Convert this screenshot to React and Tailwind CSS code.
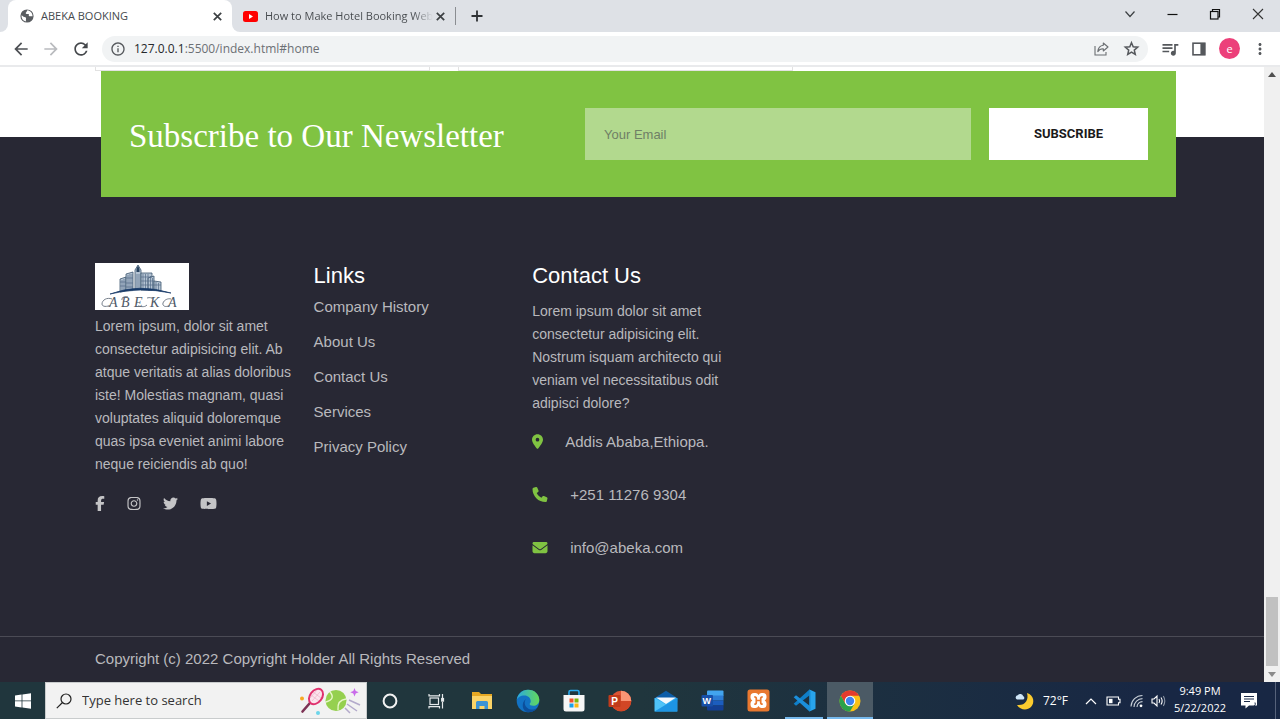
import React from "react";
import { FaFacebookF, FaInstagram, FaTwitter, FaYoutube, FaLocationDot, FaPhone, FaEnvelope } from "react-icons/fa6";
import { MdArrowBack, MdArrowForward, MdRefresh, MdInfoOutline, MdQueueMusic, MdMoreVert } from "react-icons/md";

const UI = "font-['Open_Sans','Noto_Sans',sans-serif]";

function ShareIcon() {
  return (
    <svg width="15" height="14" viewBox="0 0 15 14" fill="none" stroke="#6b6e72" strokeWidth="1.1">
      <path d="M1 4v9h11v-3" />
      <path d="M9.300 1l4.700 4-4.700 4V6.800C6.500 6.700 5 7.600 3.800 9.600 4.200 6 6 3.700 9.300 3.300z" strokeLinejoin="round" />
    </svg>
  );
}

function StarIcon() {
  return (
    <svg width="17" height="17" viewBox="0 0 17 17" fill="none" stroke="#55585c" strokeWidth="1.5">
      <path d="M8.500 2.700l1.700 4.100 4.500.4-3.400 2.900 1 4.400-3.800-2.300-3.800 2.300 1-4.400-3.400-2.900 4.500-.4z" />
    </svg>
  );
}

function CloseIcon() {
  return (
    <svg width="13" height="13" viewBox="0 0 13 13" stroke="#3c4043" strokeWidth="1.700">
      <path d="M2.800 2.800l7.400 7.400M10.200 2.800l-7.400 7.400" />
    </svg>
  );
}

function PanelIcon() {
  return (
    <svg width="14" height="14" viewBox="0 0 14 14">
      <rect x="1" y="1.200" width="11.800" height="11.600" fill="none" stroke="#55585c" strokeWidth="1.600" />
      <rect x="8.400" y="1" width="4.800" height="12" fill="#55585c" />
    </svg>
  );
}

function TabStrip() {
  return (
    <header className={`flex h-8 items-stretch bg-[#dee1e6] text-[11px] text-[#45494d] ${UI}`}>
      <div className="w-2 bg-white">
        <div className="h-full rounded-br-lg bg-[#dee1e6]" />
      </div>
      <div className="flex w-[224px] items-center rounded-t-lg bg-white pl-3 pr-2">
        <svg width="14" height="14" viewBox="0 0 14 14">
          <circle cx="7" cy="7" r="6.600" fill="#5a5d61" />
          <path d="M1.600 6.200c1.200.4 1.400 1.700 2.800 1.700 1.300 0 2 .9 1.600 2-.3.800-.2 1.600.2 2.400-2.900-.2-5-2.900-4.600-6.100z" fill="#fff" />
          <path d="M7.400 1.200c-.9 1-.4 1.700-1.400 2.400-.6.500-.2 1.300.6 1.300h1.600c.7 0 .9.700.6 1.300-.2.600.4 1 1.200 1h2.600c-.1-3-2.200-5.700-5.200-6z" fill="#fff" />
        </svg>
        <span className="ml-[7px] flex-1">ABEKA BOOKING</span>
        <button aria-label="Close tab ABEKA BOOKING"><CloseIcon /></button>
      </div>
      <div className="w-2 bg-white">
        <div className="h-full rounded-bl-lg bg-[#dee1e6]" />
      </div>
      <div className="flex w-[215px] items-center pl-[3px] pr-2">
        <svg width="15" height="11" viewBox="0 0 15 11" className="shrink-0">
          <rect width="15" height="11" rx="2.500" fill="#f00" />
          <path d="M6 3l4 2.500L6 8z" fill="#fff" />
        </svg>
        <span className="ml-[7px] whitespace-nowrap bg-linear-to-r from-[#45494d] from-88% to-[#dee1e6] bg-clip-text text-transparent">How to Make Hotel Booking Web</span>
        <button aria-label="Close tab How to Make Hotel Booking Web" className="ml-auto"><CloseIcon /></button>
      </div>
      <div className="my-[7px] w-px bg-[#8a8d91]" />
      <button aria-label="New tab" className="ml-[14px]">
        <svg width="14" height="14" viewBox="0 0 14 14" stroke="#2e3134" strokeWidth="1.800"><path d="M7 1.500v11M1.500 7h11" /></svg>
      </button>
      <div className="ml-auto flex items-center gap-[31px] pb-[5px] pr-4">
        <button aria-label="Search tabs">
          <svg width="12" height="12" viewBox="0 0 12 12" fill="none" stroke="#3c4043" strokeWidth="1.200"><path d="M1.500 3.500L6 8.500l4.500-5" /></svg>
        </button>
        <button aria-label="Minimize">
          <svg width="11" height="12" viewBox="0 0 11 12" stroke="#111" strokeWidth="1.200"><path d="M0.500 6.500h10" /></svg>
        </button>
        <button aria-label="Restore">
          <svg width="12" height="12" viewBox="0 0 12 12" fill="none" stroke="#111" strokeWidth="1.200"><rect x="1.500" y="3.500" width="7.500" height="7.500" /><path d="M3.500 3.500V1.500h7v7.500H9" /></svg>
        </button>
        <button aria-label="Close">
          <svg width="12" height="12" viewBox="0 0 12 12" stroke="#333" strokeWidth="1.100"><path d="M1 1l10 10M11 1L1 11" /></svg>
        </button>
      </div>
    </header>
  );
}

function Toolbar() {
  return (
    <div className={`flex h-[35px] items-center border-b-2 border-[#e9eaec] bg-white pl-[11px] pr-[11px] ${UI}`}>
      <button aria-label="Back"><MdArrowBack size={20} color="#4d5054" /></button>
      <button aria-label="Forward" className="ml-[10px]"><MdArrowForward size={20} color="#b9bbbe" /></button>
      <button aria-label="Reload" className="ml-[10px]"><MdRefresh size={20} color="#45484c" /></button>
      <div className="ml-[11px] flex h-[26px] flex-1 items-center rounded-full bg-[#f1f3f4] pl-2 pr-2">
        <MdInfoOutline size={16} color="#55585c" />
        <a href="#home" className="ml-2 flex-1 text-[12px] text-[#6c7074]"><span className="text-[#25282b]">127.0.0.1</span>:5500/index.html#home</a>
        <button aria-label="Share"><ShareIcon /></button>
        <button aria-label="Bookmark" className="ml-[14px]"><StarIcon /></button>
      </div>
      <button aria-label="Media" className="ml-3"><MdQueueMusic size={20} color="#55585c" /></button>
      <button aria-label="Side panel" className="ml-3"><PanelIcon /></button>
      <button aria-label="Profile" className="ml-[13px] flex h-[21px] w-[21px] items-center justify-center rounded-full bg-[#ec407a] text-[11px] leading-none text-white">e</button>
      <button aria-label="More" className="ml-[11px]"><MdMoreVert size={18} color="#55585c" /></button>
    </div>
  );
}

function BrandLogo() {
  return (
    <svg width="94" height="47" viewBox="0 0 94 47" role="img" aria-label="ABEKA" className="block">
      <rect width="94" height="47" fill="#fff" />
      <g fill="#b4c3d3" stroke="#3c556f" strokeWidth="0.800">
        <path d="M25 16l6-2v14l-6 1z" />
        <path d="M31 11l7-2v18l-7 1z" />
        <path d="M40 7l3-5 3 5v19h-6z" />
        <path d="M46 10h11v17H46z" />
        <path d="M53 15l6-2v14h-6z" />
        <path d="M59 18l7 1v9l-7-1z" />
      </g>
      <path d="M41.500 6l1.500-3.500L44.500 6v3h-3z" fill="#27425f" />
      <path d="M27 17v11M29 16v11M33 12v15M35 11v16M37 11v15M42 11v15M44 11v15M48 11v15M50.500 11v15M53 11v15M55.500 13v14M57.500 15v12M61 19v8M63.500 20v8M25 19h6M25 23h6M31 15h7M31 20h7M31 24h7M46 14h11M46 18h13M46 22h20" stroke="#536c86" strokeWidth="0.700" fill="none" />
      <path d="M15 31Q44 20 76 30 45 23.500 15 31z" fill="#173a68" stroke="#173a68" strokeWidth="0.700" />
      <text y="43.500" fontFamily="Liberation Serif, serif" fontStyle="italic" fontSize="14" fill="#4e5966">
        <tspan x="14">A</tspan><tspan x="26">B</tspan><tspan x="39">E</tspan><tspan x="55">K</tspan><tspan x="73">A</tspan>
      </text>
      <path d="M16 42c-4 2-9 2-9-1 0-4 5-7 10-5M27 37c-1-3 4-4 6-3M52 35c3-1 5 0 6 1M52 42c-3 3-7 1-9 1M75 42c-4 3-8 1-7-2 1-3 5-5 8-4" stroke="#66717e" strokeWidth="0.900" fill="none" />
    </svg>
  );
}

const links = ["Company History", "About Us", "Contact Us", "Services", "Privacy Policy"];

const socials = [
  { name: "Facebook", Icon: FaFacebookF, width: "w-[10px]" },
  { name: "Instagram", Icon: FaInstagram, width: "w-[14px]" },
  { name: "Twitter", Icon: FaTwitter, width: "w-[15px]" },
  { name: "YouTube", Icon: FaYoutube, width: "w-[17px]" },
];

function Page() {
  return (
    <main className="flex min-w-0 flex-1 flex-col bg-[#282834] font-['Liberation_Sans',Arial,sans-serif]">
      <div className="h-[70px] bg-white pl-[95px]">
        <div className="flex h-1 gap-7">
          <div className="w-[335px] border border-t-0 border-[#e2e2e2]" />
          <div className="w-[335px] border border-t-0 border-[#e2e2e2]" />
        </div>
      </div>
      <form className="-mt-[66px] ml-[101px] mr-[88px] flex h-[126px] items-center bg-[#80c342] px-7" onSubmit={(e) => e.preventDefault()}>
        <h2 className="flex-1 whitespace-nowrap pt-1 font-['Liberation_Serif',serif] text-[33px] leading-10 text-white">Subscribe to Our Newsletter</h2>
        <input type="email" aria-label="Your Email" placeholder="Your Email" className="h-[52px] w-[386px] bg-[#b2d98e] px-[19px] text-[13px] text-[#444] outline-none placeholder:text-[#6f7f66]" />
        <button className="ml-[18px] h-[52px] w-[159px] bg-white font-['Roboto',sans-serif] text-[13px] font-bold text-[#1a1a1a]">SUBSCRIBE</button>
      </form>
      <footer className="flex flex-1 flex-col text-[#b9b9bd]">
        <div className="ml-[95px] mr-[76px] grid flex-1 grid-cols-5 pt-[66px]">
          <section className="pr-5">
            <BrandLogo />
            <p className="mt-[5px] text-[14px] leading-[23px]">Lorem ipsum, dolor sit amet consectetur adipisicing elit. Ab atque veritatis at alias doloribus iste! Molestias magnam, quasi voluptates aliquid doloremque quas ipsa eveniet animi labore neque reiciendis ab quo!</p>
            <div className="mt-5 flex items-center gap-[22px]">
              {socials.map(({ name, Icon, width }) => (
                <a key={name} href="#home" aria-label={name} className={width}><Icon className="h-[15px] w-full" color="#c4c4c6" /></a>
              ))}
            </div>
          </section>
          <section>
            <h3 className="text-[22px] leading-[26px] text-white">Links</h3>
            <ul className="text-[15px] leading-[35px]">
              {links.map((l) => <li key={l}><a href="#home">{l}</a></li>)}
            </ul>
          </section>
          <section className="pr-5">
            <h3 className="text-[22px] leading-[26px] text-white">Contact Us</h3>
            <p className="mt-[11px] text-[14px] leading-[23px]">Lorem ipsum dolor sit amet consectetur adipisicing elit. Nostrum isquam architecto qui veniam vel necessitatibus odit adipisci dolore?</p>
            <ul className="text-[15px] leading-[53px]">
              <li className="flex items-center gap-[22px] whitespace-nowrap"><FaLocationDot className="h-[15px] w-[11px]" color="#80c342" />Addis Ababa,Ethiopa.</li>
              <li className="flex items-center gap-[22px]"><FaPhone className="h-[15px] w-4" color="#80c342" />+251 11276 9304</li>
              <li className="flex items-center gap-[22px]"><FaEnvelope className="h-[15px] w-4" color="#80c342" />info@abeka.com</li>
            </ul>
          </section>
        </div>
        <p className="border-t border-[#4b4b55] pb-3 pl-[95px] pt-[10px] text-[15px] leading-[23px]">Copyright (c) 2022 Copyright Holder All Rights Reserved</p>
      </footer>
    </main>
  );
}

function ScrollTrack() {
  return (
    <div className="flex w-4 flex-col items-center justify-between bg-[#f0f0f0] py-[5px]">
      <svg width="8" height="5" viewBox="0 0 8 5"><path d="M4 0l4 5H0z" fill="#505050" /></svg>
      <div className="mt-auto h-[69px] w-3 bg-[#c1c1c1]" />
      <svg width="8" height="5" viewBox="0 0 8 5" className="mt-[6px]"><path d="M4 5l4-5H0z" fill="#8a8a8a" /></svg>
    </div>
  );
}

function SportsArt() {
  return (
    <svg width="62" height="28" viewBox="0 0 62 28">
      <circle cx="3" cy="11.500" r="2" fill="#f7a823" />
      <circle cx="19" cy="26" r="2" fill="#6cd5ea" />
      <path d="M10.500 16.500l-7 8" stroke="#7d3355" strokeWidth="2.600" strokeLinecap="round" />
      <ellipse cx="17" cy="9.500" rx="6" ry="8.500" transform="rotate(38 17 9.500)" fill="#fbe3ec" stroke="#e0316e" strokeWidth="2" />
      <path d="M12 8l8 6M14 5l8 6M13 14l8-9M11 11l7-8" stroke="#e9a9c1" strokeWidth="0.600" />
      <circle cx="37" cy="13.500" r="10.500" fill="#95d04f" />
      <path d="M31 5q6 7-4 10M47 12q-9 1-8 11" stroke="#e7f7c8" strokeWidth="1.400" fill="none" />
      <path d="M55.500 1l1.200 3 3 1.200-3 1.200-1.200 3-1.200-3-3-1.200 3-1.200z" fill="#c96bea" />
      <path d="M50 13l11 5M48 17l10 7M46 21l5 5" stroke="#b3aacb" strokeWidth="1.500" />
    </svg>
  );
}

const apps = [
  { name: "Cortana", art: <svg width="16" height="16" viewBox="0 0 16 16"><circle cx="8" cy="8" r="6.400" fill="none" stroke="#f1f1f1" strokeWidth="2" /></svg> },
  { name: "Task view", art: <svg width="17" height="16" viewBox="0 0 17 16" fill="none" stroke="#e6eaec" strokeWidth="1.200"><rect x="2" y="5" width="8.500" height="6.500" /><path d="M1 1v1.800h10.500V1M1 15.500v-1.800h10.500v1.800M14.500 1v4M14.500 9v6.500" /><rect x="13.700" y="5.500" width="1.800" height="2.600" fill="#e6eaec" /></svg> },
  { name: "File Explorer", art: <svg width="22" height="19" viewBox="0 0 22 19"><path d="M1 1h7l2 2h11v6H1z" fill="#e6a823" /><path d="M1 5h20v13H1z" fill="#fbd367" /><path d="M5 18v-6.500Q5 10 6.500 10h9q1.500 0 1.500 1.500V18h-3.500v-3h-5v3z" fill="#3c93d4" /></svg> },
  { name: "Edge", art: <svg width="24" height="24" viewBox="0 0 24 24"><defs><linearGradient id="eg" x1="0" x2="1"><stop offset="0" stopColor="#2aa9e0" /><stop offset="1" stopColor="#63d85a" /></linearGradient></defs><circle cx="12" cy="12" r="11.300" fill="#1272c4" /><path d="M.7 11C1.500 5 6 .7 12 .7c7 0 11.300 5 11.300 10 0 4-3 6-6 6-2.500 0-4-1-3.600-2 .3-.7 1.200-1.200 1-3C14.400 9 12 6.500 8.500 6.500 4.500 6.500 1.600 8.500.7 11z" fill="url(#eg)" /><path d="M10 10c-2.500 3-1.500 9.500 5 10.500 2.500.4 5-.5 6.500-1.700-2 3-6 4.800-9.800 4.500C6 22.300 5 13 10 10z" fill="#0c4f9c" /></svg> },
  { name: "Microsoft Store", art: <svg width="22" height="24" viewBox="0 0 22 24"><path d="M6 6.500V3q0-1.500 1.500-1.500h7Q16 1.500 16 3v3.500" fill="none" stroke="#29a9ec" strokeWidth="1.600" /><path d="M0.500 6h21v14q0 2.500-2.500 2.500H3Q.5 22.500.5 20z" fill="#f6f6f6" /><path d="M6.500 9.500h4v4h-4z" fill="#f0532d" /><path d="M11.500 9.500h4v4h-4z" fill="#7eb70c" /><path d="M6.500 14.500h4v4h-4z" fill="#1ba1e8" /><path d="M11.500 14.500h4v4h-4z" fill="#fdb813" /></svg> },
  { name: "PowerPoint", art: <svg width="24" height="22" viewBox="0 0 24 22"><circle cx="13" cy="11" r="10.300" fill="#dc5434" /><path d="M13 .7A10.300 10.300 0 0 1 23.300 11H13z" fill="#fb9574" /><path d="M3.500 15A10.300 10.300 0 0 0 23.300 11H13z" fill="#d24625" /><rect x="0.500" y="5" width="12" height="12" rx="1" fill="#c13b1b" /><text x="3.300" y="14.500" fontFamily="Liberation Sans, sans-serif" fontWeight="bold" fontSize="10" fill="#fff">P</text></svg> },
  { name: "Mail", art: <svg width="24" height="22" viewBox="0 0 24 22"><path d="M.7 8L12 .8 23.300 8v4H.7z" fill="#0c5da8" /><path d="M.7 8h22.600v13.500H.7z" fill="#32aef0" /><path d="M2 7.500h20l-10 6.500z" fill="#f4f8fc" /><path d="M.7 8L12 14.500.7 21.500z" fill="#4fc3f8" /><path d="M.7 21.500L23.300 8v13.500z" fill="#1d95e4" /></svg> },
  { name: "Word", art: <svg width="23" height="21" viewBox="0 0 23 21"><path d="M6 1.500Q6 .5 7 .5h14.500q1 0 1 1V6H6z" fill="#42a4ee" /><path d="M6 5.500h16.500v5H6z" fill="#2d7cd5" /><path d="M6 10.500h16.500v5H6z" fill="#1c5dbe" /><path d="M6 15.500h16.500v4q0 1-1 1H7q-1 0-1-1z" fill="#133f94" /><rect x="0.500" y="5" width="11.500" height="11.500" rx="1" fill="#174fa8" /><text x="1.600" y="14" fontFamily="Liberation Sans, sans-serif" fontWeight="bold" fontSize="9" fill="#fff">W</text></svg> },
  { name: "XAMPP", art: <svg width="23" height="23" viewBox="0 0 23 23"><rect x="0.500" y="0.500" width="22" height="22" rx="2.500" fill="#e9782f" /><path d="M7 4h1.500q2 0 3 2 1-2 3-2H16q3.500 0 3.500 3.500v1q0 2-1.800 3 1.800 1 1.800 3v1q0 3.500-3.500 3.500h-1.500q-2 0-3-2-1 2-3 2H7q-3.500 0-3.500-3.500v-1q0-2 1.800-3-1.800-1-1.800-3v-1Q3.500 4 7 4z" fill="#fff" /><path d="M7.300 7.800q2 0 2 1.800v3.800q0 1.800-2 1.800M15.700 7.800q-2 0-2 1.800v3.800q0 1.800 2 1.800M9.300 11.500h4.400" fill="none" stroke="#e9782f" strokeWidth="1.700" /></svg> },
  { name: "Visual Studio Code", active: "line", art: <svg width="23" height="23" viewBox="0 0 23 23"><path d="M16.500.5l6 2.800v16.400l-6 2.800z" fill="#28a4ec" /><path d="M16.500.5L.7 14.700l2.300 2L17 6z" fill="#0f7fc9" /><path d="M16.500 22.500L.7 8.300l2.300-2L17 17z" fill="#1b8fdb" /><path d="M16.500.5L18 2v19l-1.500 1.500z" fill="#1e97e0" /></svg> },
  { name: "Chrome", active: "window", art: <svg width="22" height="22" viewBox="0 0 22 22"><circle cx="11" cy="11" r="10.500" fill="#fbc116" /><path d="M1.900 5.700A10.500 10.500 0 0 1 20.100 5.700H11L6.400 13.700z" fill="#e33b2e" /><path d="M1.900 5.700A10.500 10.500 0 0 0 11 21.500l4.600-7.900L6.400 13.700z" fill="#2ba24c" /><circle cx="11" cy="11" r="5.300" fill="#fff" /><circle cx="11" cy="11" r="4.200" fill="#4083f0" /></svg> },
];

function Taskbar() {
  return (
    <nav className={`flex h-[37px] items-stretch bg-linear-to-r from-[#20363d] from-50% to-[#182744] to-90% text-white ${UI}`}>
      <button aria-label="Start" className="flex w-[45px] items-center justify-center">
        <svg width="16" height="16" viewBox="0 0 16 16" fill="#fff"><path d="M0 2.400L6.600 1.500v6H0zM7.400 1.400L16 .2v7.300H7.400zM0 8.300h6.600v6.100L0 13.500zM7.400 8.300H16v7.500l-8.600-1.300z" /></svg>
      </button>
      <label className="flex w-[322px] items-center border border-[#c9cccd] bg-[#f2f2f2] pl-[10px] pr-[5px]">
        <svg width="16" height="16" viewBox="0 0 16 16" fill="none" stroke="#222" strokeWidth="1.200"><circle cx="10" cy="6" r="5" /><path d="M6.500 9.500L.8 15.200" /></svg>
        <input aria-label="Type here to search" placeholder="Type here to search" className="ml-[10px] min-w-0 flex-1 bg-transparent text-[13px] outline-none placeholder:text-[#333]" />
        <SportsArt />
      </label>
      {apps.map((a) => (
        <button key={a.name} aria-label={a.name} className={a.active === "window" ? "flex w-[46px] items-center justify-center border-b-2 border-[#76b9ed] bg-[#4b5a65] pt-[2px]" : a.active === "line" ? "mx-1 flex w-[38px] items-center justify-center border-b-2 border-[#76b9ed] pt-[2px]" : "flex w-[46px] items-center justify-center"}>{a.art}</button>
      ))}
      <div className="ml-auto flex items-center text-[12px]">
        <svg width="20" height="20" viewBox="0 0 20 20"><path d="M12 2c7 2 8 10 4 14-4 4-11 3-14-2 8 1 12-5 10-12z" fill="#fbcb2e" /><path d="M2 8.500a2.200 2.200 0 0 1 .8-4.200 3 3 0 0 1 5.400 1 1.700 1.700 0 0 1 0 3.200z" fill="#cfe6f8" /></svg>
        <span className="ml-2">72°F</span>
        <svg width="12" height="8" viewBox="0 0 12 8" fill="none" stroke="#fff" strokeWidth="1.200" className="ml-[17px]"><path d="M1 7l5-5 5 5" /></svg>
        <svg width="15" height="10" viewBox="0 0 15 10" className="ml-[9px]"><path d="M1 1h11.500v2.200h1.500v3.600h-1.500V9H1z" fill="none" stroke="#fff" strokeWidth="1.100" /><rect x="3" y="2.800" width="3.500" height="4.400" fill="#fff" /></svg>
        <svg width="14" height="14" viewBox="0 0 14 14" fill="none" stroke="#c9d0d8" strokeWidth="1.100" className="ml-[9px]"><path d="M1 12.500A11.500 11.500 0 0 1 12.500 1.500M4 13A8.500 8.500 0 0 1 12.500 4.600M7 13a5.500 5.500 0 0 1 5.500-5.400" /><circle cx="11" cy="11.800" r="1.400" fill="#fff" stroke="none" /></svg>
        <svg width="15" height="14" viewBox="0 0 15 14" fill="none" stroke="#fff" strokeWidth="1.100" className="ml-[7px]"><path d="M1 5h2l3-3v10L3 9H1zM8 5q1.300 2 0 4M10 3.500q2.300 3.500 0 7" /><path d="M12.300 2q3 5 0 10" stroke="#8c96a5" /></svg>
        <div className="ml-[7px] w-[54px] whitespace-nowrap pb-[3px] text-center text-[11px] leading-[17px]">
          <div>9:49 PM</div>
          <div>5/22/2022</div>
        </div>
        <svg width="16" height="16" viewBox="0 0 16 16" className="ml-[14px]"><path d="M0 0h16v12.500h-8L4.500 15.500v-3H0z" fill="#fff" /><path d="M3 3.500h10M3 6h10M3 8.500h6" stroke="#1b2a48" strokeWidth="1.100" /><path d="M10 13.500a3 3 0 0 0 4-4" stroke="#1b2a48" fill="none" /></svg>
        <div className="ml-[18px] mr-1 h-[37px] w-px bg-[#56627a]" />
      </div>
    </nav>
  );
}

export default function App() {
  return (
    <div className="flex min-h-screen flex-col">
      <TabStrip />
      <Toolbar />
      <div className="flex flex-1 items-stretch">
        <Page />
        <ScrollTrack />
      </div>
      <Taskbar />
    </div>
  );
}
